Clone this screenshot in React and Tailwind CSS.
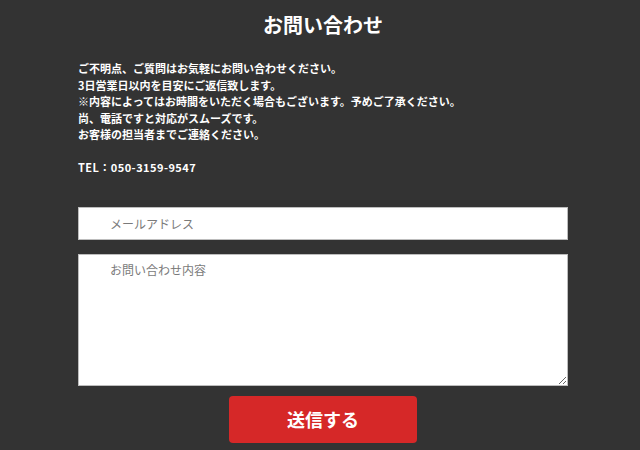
import React from 'react';

const App = () => {
  return (
    <div className="w-[640px] h-[450px] overflow-hidden bg-[#333333] font-['Noto_Sans_CJK_JP',sans-serif] text-white">
      <div className="ml-[78px] w-[490px] pt-[11px]">
        <h2 className="text-center text-[20px] font-bold leading-[28px]">お問い合わせ</h2>

        <div className="mt-[21px] text-[11px] font-bold leading-[16.5px]">
          <p>ご不明点、ご質問はお気軽にお問い合わせください。</p>
          <p>3日営業日以内を目安にご返信致します。</p>
          <p>※内容によってはお時間をいただく場合もございます。予めご了承ください。</p>
          <p>尚、電話ですと対応がスムーズです。</p>
          <p>お客様の担当者までご連絡ください。</p>
          <p className="mt-[16.5px] tracking-[0.45px]">TEL：050-3159-9547</p>
        </div>

        <form className="mt-[31px] flex flex-col">
          <input
            type="email"
            placeholder="メールアドレス"
            className="h-[33px] w-full bg-white border border-[#bdbdbd] pl-[31px] text-[12px] text-[#333] placeholder:text-[#7a7a7a] outline-none"
          />
          <textarea
            placeholder="お問い合わせ内容"
            className="mt-[14px] h-[132px] w-full bg-white border border-[#bdbdbd] pl-[31px] pt-[6px] text-[12px] text-[#333] placeholder:text-[#7a7a7a] outline-none"
          />
          <button
            type="button"
            className="mx-auto mt-[10px] h-[47px] w-[188px] rounded-[4px] bg-[#d62828] text-[18px] font-bold text-white"
          >
            送信する
          </button>
        </form>
      </div>
    </div>
  );
};

export default App;
